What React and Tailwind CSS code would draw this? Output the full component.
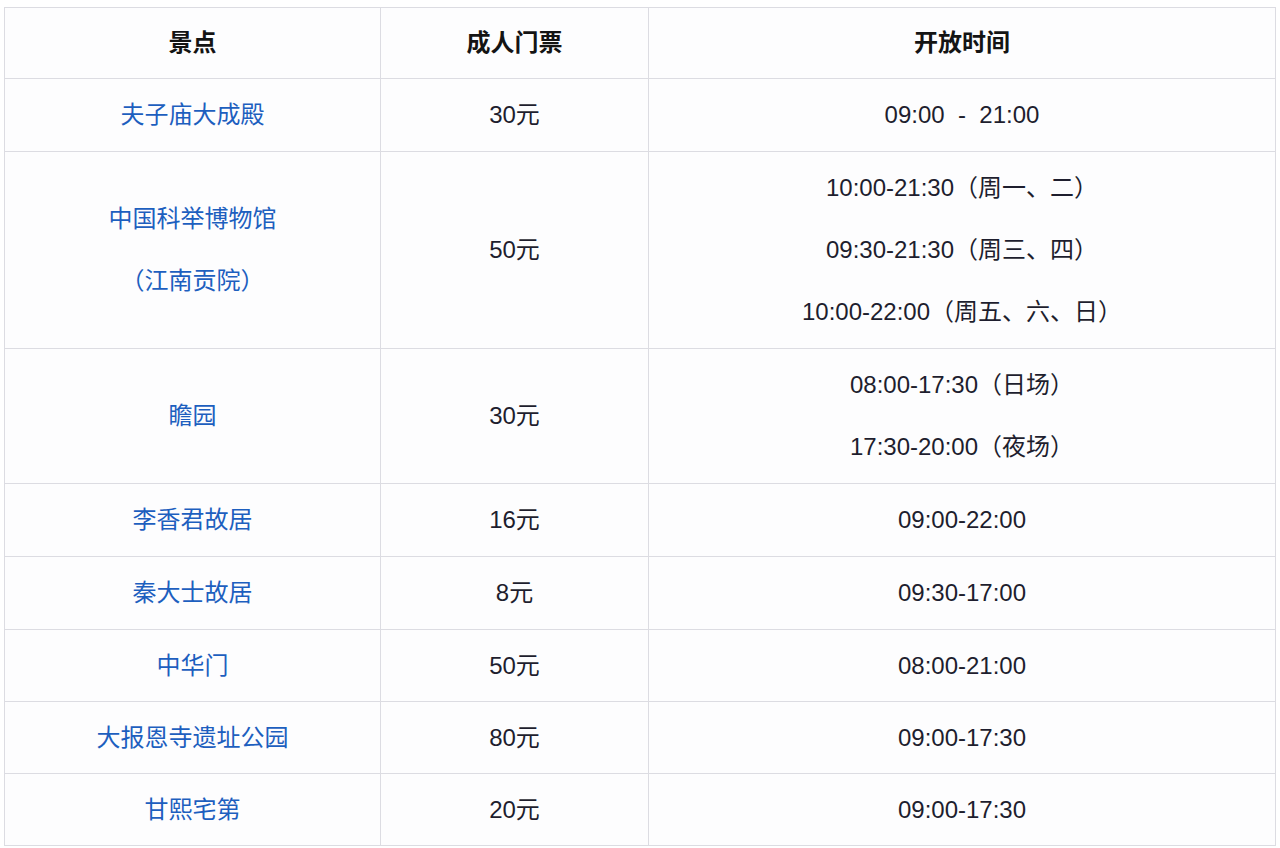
const ROWS = [
  { name: ['夫子庙大成殿'], price: '30元', hours: ['09:00  -  21:00'] },
  {
    name: ['中国科举博物馆', '（江南贡院）'],
    price: '50元',
    hours: ['10:00-21:30（周一、二）', '09:30-21:30（周三、四）', '10:00-22:00（周五、六、日）'],
  },
  { name: ['瞻园'], price: '30元', hours: ['08:00-17:30（日场）', '17:30-20:00（夜场）'] },
  { name: ['李香君故居'], price: '16元', hours: ['09:00-22:00'] },
  { name: ['秦大士故居'], price: '8元', hours: ['09:30-17:00'] },
  { name: ['中华门'], price: '50元', hours: ['08:00-21:00'], tight: true },
  { name: ['大报恩寺遗址公园'], price: '80元', hours: ['09:00-17:30'], tight: true },
  { name: ['甘熙宅第'], price: '20元', hours: ['09:00-17:30'], tight: true },
];

const cell = 'border border-[#dcdce2] px-3 text-center align-middle leading-[62px]';

function Lines({ items }) {
  return items.map((t) => (
    <div key={t} className="whitespace-pre">
      {t}
    </div>
  ));
}

export default function App() {
  return (
    <div
      className="min-h-screen bg-white pl-[4px] pt-[7px] text-[24px]"
      style={{ fontFamily: '"Liberation Sans", "Noto Sans CJK SC", sans-serif' }}
    >
      <table className="w-[1271px] table-fixed border-collapse bg-[#fdfdfe]">
        <colgroup>
          <col className="w-[376px]" />
          <col className="w-[268px]" />
          <col className="w-[627px]" />
        </colgroup>
        <thead>
          <tr className="text-[#141414] font-bold">
            <th className={`${cell} py-[4px]`}>景点</th>
            <th className={`${cell} py-[4px]`}>成人门票</th>
            <th className={`${cell} py-[4px]`}>开放时间</th>
          </tr>
        </thead>
        <tbody>
          {ROWS.map((r) => {
            const pad = r.tight ? 'pt-[5px] pb-[4px]' : 'py-[5px]';
            return (
              <tr key={r.name[0]}>
                <td className={`${cell} ${pad} text-[#1d5fbf]`}>
                  <Lines items={r.name} />
                </td>
                <td className={`${cell} ${pad} text-[#1e1e2e]`}>{r.price}</td>
                <td className={`${cell} ${pad} text-[#1e1e2e]`}>
                  <Lines items={r.hours} />
                </td>
              </tr>
            );
          })}
        </tbody>
      </table>
    </div>
  );
}
